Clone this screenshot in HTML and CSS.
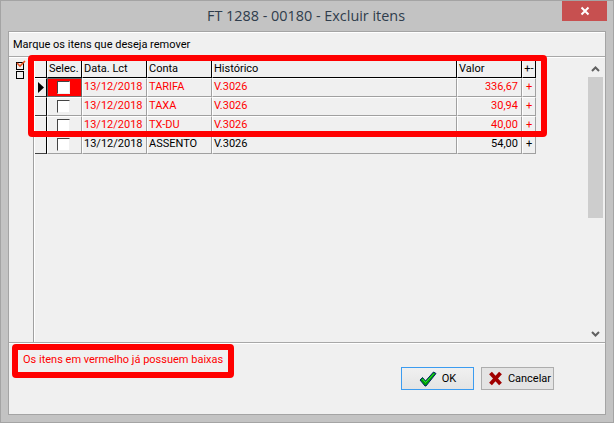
FILE: index.html
```html
<!DOCTYPE html>
<html lang="pt">
<head>
<meta charset="utf-8">
<title>FT 1288 - 00180 - Excluir itens</title>
<link rel="stylesheet" href="styles.css">
</head>
<body>
<div class="window">
  <header class="titlebar">
    <span class="title">FT 1288 - 00180 - Excluir itens</span>
    <button class="close" aria-label="Fechar">
      <svg width="10" height="10" viewBox="0 0 10 10"><path d="M1.500 1.500L8.500 8.500M8.500 1.500L1.500 8.500" stroke="#fff" stroke-width="2"/></svg>
    </button>
  </header>
  <main class="client">
    <div class="prompt">Marque os itens que deseja remover</div>
    <div class="body-row">
      <div class="side">
        <span class="mini-box"><svg width="10" height="8" viewBox="0 0 10 8" class="mini-check"><path d="M1 3L4 6L9 1" fill="none" stroke="#e8501e" stroke-width="1.6"/></svg></span>
        <span class="mini-box"></span>
      </div>
      <div class="grid-area">
        <div class="grid">
          <div class="row head">
            <div class="c ind"></div><div class="c sel">Selec.</div><div class="c dat">Data. Lct</div><div class="c con">Conta</div><div class="c his">Histórico</div><div class="c val">Valor</div><div class="c pls">+-</div>
          </div>
          <div class="row red">
            <div class="c ind"><svg width="6" height="11" viewBox="0 0 6 11"><path d="M0 0L6 5.500L0 11Z" fill="#000"/></svg></div><div class="c sel active"><span class="box"></span></div><div class="c dat">13/12/2018</div><div class="c con">TARIFA</div><div class="c his">V.3026</div><div class="c val">336,67</div><div class="c pls">+</div>
          </div>
          <div class="row red">
            <div class="c ind"></div><div class="c sel"><span class="box"></span></div><div class="c dat">13/12/2018</div><div class="c con">TAXA</div><div class="c his">V.3026</div><div class="c val">30,94</div><div class="c pls">+</div>
          </div>
          <div class="row red">
            <div class="c ind"></div><div class="c sel"><span class="box"></span></div><div class="c dat">13/12/2018</div><div class="c con">TX-DU</div><div class="c his">V.3026</div><div class="c val">40,00</div><div class="c pls">+</div>
          </div>
          <div class="row">
            <div class="c ind"></div><div class="c sel"><span class="box"></span></div><div class="c dat">13/12/2018</div><div class="c con">ASSENTO</div><div class="c his">V.3026</div><div class="c val">54,00</div><div class="c pls">+</div>
          </div>
        </div>
        <div class="scrollbar">
          <div class="arrow"><svg width="9" height="6" viewBox="0 0 9 6"><path d="M1 5L4.500 1.500L8 5" fill="none" stroke="#606060" stroke-width="2"/></svg></div>
          <div class="thumb"></div>
          <div class="rest"></div>
          <div class="arrow"><svg width="9" height="6" viewBox="0 0 9 6"><path d="M1 1L4.500 4.500L8 1" fill="none" stroke="#606060" stroke-width="2"/></svg></div>
        </div>
      </div>
    </div>
    <footer class="foot">
      <p class="note">Os itens em vermelho já possuem baixas</p>
      <div class="actions">
        <button class="btn default">
          <svg width="18" height="16" viewBox="0 0 18 16"><path d="M1 9L3.500 6.500L6.500 10L14.500 1L17 2.500L7 15H6Z" fill="#00a000" stroke="#00206a" stroke-width="1"/><path d="M3.500 8L6.500 11.500L15 2.500" fill="none" stroke="#30e040" stroke-width="1"/></svg>
          <span>OK</span>
        </button>
        <button class="btn cancel">
          <svg width="15" height="15" viewBox="0 0 15 15"><path d="M2.500 2L12.500 13M12.500 2L2.500 13" stroke="#a00000" stroke-width="3.800"/></svg>
          <span>Cancelar</span>
        </button>
      </div>
    </footer>
    <div class="mark mark-grid"></div>
    <div class="mark mark-note"></div>
  </main>
</div>
</body>
</html>
```
FILE: styles.css
```css
* { box-sizing: border-box; }
html, body { margin: 0; padding: 0; }
body { width: 614px; height: 423px; overflow: hidden; font-family: Roboto, "Liberation Sans", sans-serif; font-size: 11px; }
.window { position: relative; width: 614px; height: 423px; background: #c3c3c3; border: 1px solid #a4a4a4; display: flex; flex-direction: column; padding: 0 7px 7px 7px; }
.titlebar { position: relative; height: 30px; flex: none; display: flex; align-items: center; justify-content: center; padding: 0 2px 2px 0; }
.title { font-family: "Open Sans", sans-serif; font-size: 14.400px; color: #2f3d4c; }
.close { position: absolute; top: 0; right: -1px; width: 45px; height: 20px; padding: 0; border: 0; background: #c75050; display: flex; align-items: center; justify-content: center; }
.client { position: relative; flex: 1; background: #f0f0f0; border: 1px solid #a4a4a4; display: flex; flex-direction: column; }
.prompt { height: 25px; flex: none; padding: 5px 0 0 4px; line-height: 14px; color: #000; border-top: 1px solid #fff; border-bottom: 1px solid #a8a8a8; box-shadow: 0 1px 0 #fff; }
.body-row { flex: 1; display: flex; min-height: 0; border-bottom: 1px solid #a8a8a8; box-shadow: 0 1px 0 #fff; }
.side { width: 25px; flex: none; border-right: 1px solid #a0a0a0; display: flex; flex-direction: column; align-items: flex-end; padding: 5px 9px 0 0; gap: 1px; }
.mini-box { position: relative; display: block; width: 8px; height: 8px; border: 1px solid #000; background: #f0f0f0; }
.mini-check { position: absolute; left: -1px; top: -3px; }
.grid-area { flex: 1; display: flex; justify-content: space-between; border-left: 1px solid #fff; padding: 3px 2px 0 0; min-width: 0; }
.grid { width: 501px; }
.row { display: flex; height: 19px; }
.row.head { height: 18px; }
.c { height: 100%; border-right: 1px solid #a0a0a0; border-bottom: 1px solid #a0a0a0; border-top: 1px solid #fff; border-left: 1px solid #fff; line-height: 16px; padding-left: 1px; white-space: nowrap; overflow: hidden; }
.ind { width: 12px; padding: 0; display: flex; align-items: center; border-left: 0; border-right: 1px solid #000; border-bottom: 1px solid #444; background: #f0f0f0; }
.ind svg { margin-left: 3px; }
.sel { width: 35px; display: flex; align-items: center; justify-content: center; padding: 0 2px 0 0; }
.dat, .con { width: 65px; }
.his { width: 245px; }
.val { width: 65px; text-align: right; padding: 0 3px 0 0; }
.pls { width: 14px; padding: 0; text-align: center; }
.head .c { border-right-color: #000; border-bottom-color: #000; }
.head .sel { display: block; padding-left: 1px; text-align: left; }
.head .val { text-align: left; padding-left: 1px; }
.red .c { color: #f00; }
.active { background: #f00; border: 1px solid #666; }
.box { display: block; width: 13px; height: 13px; background: #fff; border-top: 1px solid #444; border-left: 1px solid #444; border-right: 1px solid #f0f0f0; border-bottom: 1px solid #f0f0f0; }
.scrollbar { width: 15px; display: flex; flex-direction: column; }
.arrow { height: 17px; flex: none; display: flex; align-items: center; justify-content: center; background: #f0f0f0; }
.thumb { height: 141px; flex: none; background: #cdcdcd; }
.rest { flex: 1; background: #f0f0f0; }
.foot { height: 71px; flex: none; display: flex; flex-direction: column; }
.note { margin: 0; padding: 10px 0 0 14px; height: 24px; color: #f00; line-height: 14px; }
.actions { display: flex; justify-content: flex-end; gap: 7px; padding-right: 51px; }
.btn { width: 73px; height: 23px; font: inherit; font-size: 11px; color: #000; background: #e4e4e4; border: 1px solid #adadad; display: flex; align-items: center; justify-content: center; gap: 5px; padding: 0; }
.btn.default { border: 1px solid #3c9cf0; background: linear-gradient(#f0f0f0, #e4e4e4); }
.btn.cancel { padding-left: 4px; }
.mark { position: absolute; border: 6px solid #f00; border-radius: 4px; pointer-events: none; }
.mark-grid { left: 19px; top: 23px; width: 519px; height: 82px; }
.mark-note { left: 3px; top: 312px; width: 222px; height: 34px; }
```
